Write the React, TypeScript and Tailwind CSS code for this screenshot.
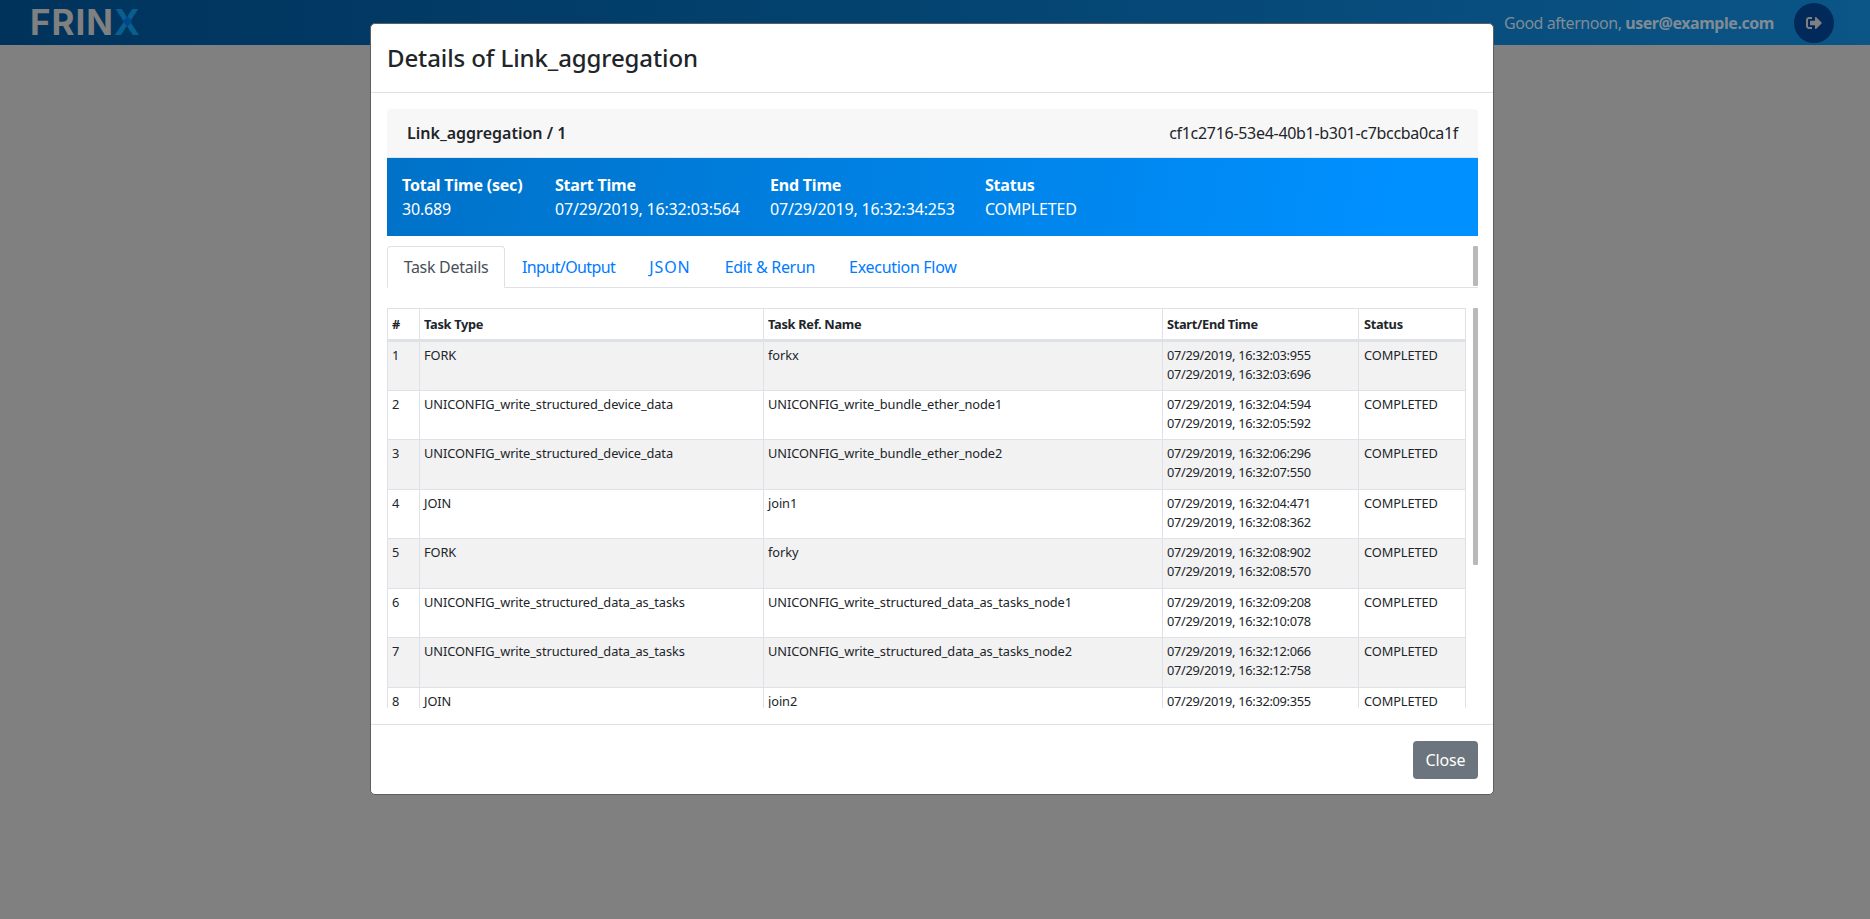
import React from 'react'
import { FaSignOutAlt } from 'react-icons/fa'

const tasks = [
  ['1', 'FORK', 'forkx', '07/29/2019, 16:32:03:955', '07/29/2019, 16:32:03:696'],
  ['2', 'UNICONFIG_write_structured_device_data', 'UNICONFIG_write_bundle_ether_node1', '07/29/2019, 16:32:04:594', '07/29/2019, 16:32:05:592'],
  ['3', 'UNICONFIG_write_structured_device_data', 'UNICONFIG_write_bundle_ether_node2', '07/29/2019, 16:32:06:296', '07/29/2019, 16:32:07:550'],
  ['4', 'JOIN', 'join1', '07/29/2019, 16:32:04:471', '07/29/2019, 16:32:08:362'],
  ['5', 'FORK', 'forky', '07/29/2019, 16:32:08:902', '07/29/2019, 16:32:08:570'],
  ['6', 'UNICONFIG_write_structured_data_as_tasks', 'UNICONFIG_write_structured_data_as_tasks_node1', '07/29/2019, 16:32:09:208', '07/29/2019, 16:32:10:078'],
  ['7', 'UNICONFIG_write_structured_data_as_tasks', 'UNICONFIG_write_structured_data_as_tasks_node2', '07/29/2019, 16:32:12:066', '07/29/2019, 16:32:12:758'],
  ['8', 'JOIN', 'join2', '07/29/2019, 16:32:09:355', '07/29/2019, 16:32:13:120'],
]

const summary = [
  ['Total Time (sec)', '30.689'],
  ['Start Time', '07/29/2019, 16:32:03:564'],
  ['End Time', '07/29/2019, 16:32:34:253'],
  ['Status', 'COMPLETED'],
]

const tabs = [
  ['Input/Output', 'tracking-[-0.6px]'],
  ['JSON', 'tracking-[0.9px]'],
  ['Edit & Rerun', 'tracking-[-0.3px]'],
  ['Execution Flow', 'tracking-[-0.3px]'],
]

const App: React.FC = () => {
  return (
    <div className="relative h-[919px] overflow-hidden bg-[#808080] font-['Noto_Sans',sans-serif] text-[#212529]">
      <nav className="flex h-[45px] items-center justify-between bg-gradient-to-r from-[#00335c] to-[#0b5587] pl-[30px] pr-9">
        <div className="relative font-['Inter',sans-serif] text-[35px] font-bold leading-none tracking-[1px] text-[#808080]">
          FRIN<span className="text-[#07608f]">X</span>
          <span className="absolute right-[10px] top-[13px] h-[7px] w-[7px] rotate-45 bg-[#03468c]" />
        </div>
        <div className="flex items-center gap-5">
          <span className="text-base tracking-[-0.45px] text-[#7f8c96]">
            Good afternoon, <b className="font-bold text-[#7f8c96]">user@example.com</b>
          </span>
          <button className="flex h-10 w-10 items-center justify-center rounded-full bg-[#012a5a] text-[#808080]" type="button">
            <FaSignOutAlt className="text-base" />
          </button>
        </div>
      </nav>

      {/* modal */}
      <div className="absolute left-[370px] top-[23px] flex h-[772px] w-[1124px] flex-col rounded-[5px] border border-[#5f5f5f] bg-white">
        <div className="flex h-[69px] shrink-0 items-center border-b border-[#dee2e6] px-4">
          <h1 className="text-2xl font-medium tracking-[-0.1px]">Details of Link_aggregation</h1>
        </div>

        <div className="relative flex-1 overflow-hidden pl-4 pr-[15px] pt-4">
          <div className="flex h-[49px] items-center justify-between rounded-t-[4px] border-b border-[#dfe6ec] bg-[#f7f7f7] px-5 text-base">
            <b className="font-semibold tracking-normal">Link_aggregation / 1</b>
            <span className="tracking-[-0.3px]">cf1c2716-53e4-40b1-b301-c7bccba0ca1f</span>
          </div>
          <div className="grid h-[78px] grid-cols-[153px_215px_215px_auto] content-center bg-[linear-gradient(100deg,#0072c8,#0090ff_92%)] pl-[15px] pr-4 text-base leading-6 text-white">
            {summary.map(([label, value]) => (
              <div key={label}>
                <div className="font-bold tracking-[-0.2px]">{label}</div>
                <div className="tracking-[-0.17px]">{value}</div>
              </div>
            ))}
          </div>

          <div className="relative mt-[10px] flex h-[42px] border-b border-[#dee2e6] text-base">
            <button className="h-[42px] w-[118px] rounded-t-[4px] border border-[#dee2e6] border-b-white bg-white tracking-[-0.3px] text-[#495057]" type="button">
              Task Details
            </button>
            {tabs.map(([t, spacing]) => (
              <a key={t} className={`flex h-[41px] items-center px-[17px] text-[#007bff] ${spacing}`}>
                {t}
              </a>
            ))}
            <div className="absolute right-0 top-0 h-10 w-[5px] rounded-[1px] bg-[#b9b9b9]" />
          </div>

          <div className="relative mt-5 h-[400px] overflow-hidden">
            <table className="w-[1078px] table-fixed border-collapse text-[12.8px] leading-[19.2px] tracking-[-0.08px]">
              <colgroup>
                <col className="w-[32px]" />
                <col className="w-[344px]" />
                <col className="w-[399px]" />
                <col className="w-[196px]" />
                <col className="w-[107px]" />
              </colgroup>
              <thead>
                <tr className="h-[32px] text-left">
                  {['#', 'Task Type', 'Task Ref. Name', 'Start/End Time'].map((h) => (
                    <th key={h} className="border border-b-[3px] border-[#dee2e6] px-1 pt-[2px] font-bold tracking-[-0.3px]">{h}</th>
                  ))}
                  <th className="border border-b-[3px] border-[#dee2e6] pl-[5px] pr-1 pt-[2px] font-bold tracking-[-0.3px]">Status</th>
                </tr>
              </thead>
              <tbody>
                {tasks.map((t, i) => (
                  <tr key={t[0]} className={i % 2 === 0 ? 'h-[49.5px] bg-[#f2f2f2]' : 'h-[49.5px] bg-white'}>
                    <td className="border border-[#dee2e6] px-1 pb-[5px] pt-1 align-top">{t[0]}</td>
                    <td className="border border-[#dee2e6] px-1 pb-[5px] pt-1 align-top">{t[1]}</td>
                    <td className="border border-[#dee2e6] px-1 pb-[5px] pt-1 align-top">{t[2]}</td>
                    <td className="border border-[#dee2e6] px-1 pb-[5px] pt-1 align-top tracking-[-0.3px]">
                      {t[3]}
                      <br />
                      {t[4]}
                    </td>
                    <td className="border border-[#dee2e6] pb-[5px] pl-[5px] pr-1 pt-1 align-top">COMPLETED</td>
                  </tr>
                ))}
              </tbody>
            </table>
            <div className="absolute right-0 top-0 h-[257px] w-[5px] rounded-[1px] bg-[#b9b9b9]" />
          </div>
        </div>

        <div className="flex h-[70px] shrink-0 items-center justify-end border-t border-[#dee2e6] pr-[15px]">
          <button className="h-[38px] w-[65px] rounded-[4px] bg-[#6c757d] text-base tracking-[-0.17px] text-white" type="button">
            Close
          </button>
        </div>
      </div>
    </div>
  )
}

export default App
